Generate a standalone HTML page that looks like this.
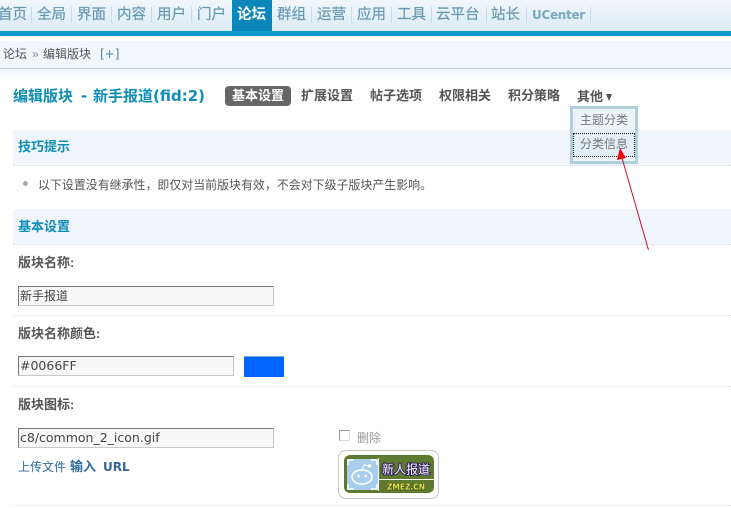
<!DOCTYPE html>
<html><head><meta charset="utf-8">
<style>
html,body{margin:0;padding:0;background:#fff;width:731px;height:508px;overflow:hidden}
body{position:relative;font-family:"Liberation Sans","Noto Sans CJK SC",sans-serif;font-size:12px;color:#555}
.a{position:absolute;white-space:nowrap;line-height:16px}
.nav{font-size:14.5px;color:#6898b0;line-height:20px;top:5px;-webkit-text-stroke:.2px #6898b0}
.d{position:absolute;top:7px;width:1px;height:16px;background:#c6dbe6}
.tab{font-size:13px;font-weight:bold;color:#555;top:88px}
.sec{position:absolute;left:13px;width:718px;height:36px;background:#f0f6fc;border-bottom:1px dotted #d4e0e8;box-sizing:border-box}
.st{font-size:13px;font-weight:bold;color:#0e8eb5}
.lb{font-size:13px;font-weight:bold;color:#555}
.dot{position:absolute;left:13px;width:718px;border-top:1px dotted #dde4e8;height:0}
.in{position:absolute;box-sizing:border-box;height:20px;background:#f8f8f8;border:1px solid #c8c8c8;border-top-color:#777;border-left-color:#777;font-family:"DejaVu Sans","Noto Sans CJK SC",sans-serif;font-size:12.5px;line-height:18px;padding-left:1px;color:#444;white-space:nowrap}
.h{font-family:'DejaVu Sans','Noto Sans CJK SC',sans-serif;font-size:15px;font-weight:bold;color:#0e8eb5;line-height:18px;top:87px}
</style></head><body>
<div style="position:absolute;left:0;top:0;width:731px;height:31px;background:linear-gradient(#f0f7fc,#dcebf6)"></div>
<div style="position:absolute;left:0;top:31px;width:731px;height:5px;background:#0b9ac9"></div>
<div style="position:absolute;left:232px;top:0;width:40px;height:31px;background:#0b86bb"></div>
<div class="a nav" style="left:-2px">首页</div><div class="d" style="left:31px"></div>
<div class="a nav" style="left:37px">全局</div><div class="d" style="left:71px"></div>
<div class="a nav" style="left:77px">界面</div><div class="d" style="left:111px"></div>
<div class="a nav" style="left:117px">内容</div><div class="d" style="left:151px"></div>
<div class="a nav" style="left:157px">用户</div><div class="d" style="left:191px"></div>
<div class="a nav" style="left:197px">门户</div>
<div class="a nav" style="left:237px;color:#fff;font-weight:bold;-webkit-text-stroke:0">论坛</div>
<div class="a nav" style="left:277px">群组</div><div class="d" style="left:311px"></div>
<div class="a nav" style="left:317px">运营</div><div class="d" style="left:351px"></div>
<div class="a nav" style="left:357px">应用</div><div class="d" style="left:391px"></div>
<div class="a nav" style="left:397px">工具</div><div class="d" style="left:431px"></div>
<div class="a nav" style="left:436px">云平台</div><div class="d" style="left:486px"></div>
<div class="a nav" style="left:491px">站长</div><div class="d" style="left:526px"></div>
<div class="a nav" style="left:532px;font-family:'DejaVu Sans',sans-serif;font-size:12px;font-weight:bold;color:#7aa8bd;-webkit-text-stroke:0;letter-spacing:-.3px">UCenter</div><div class="d" style="left:590px"></div>

<div style="position:absolute;left:0;top:41px;width:731px;height:27px;background:#f1f8fd;border-bottom:1px solid #bfd0d6"></div>
<div style="position:absolute;left:0;top:69px;width:731px;height:11px;background:linear-gradient(#eef5fa,#fff)"></div>
<div class="a" style="left:3px;top:46px">论坛</div>
<div class="a" style="left:32px;top:46px;color:#888">»</div>
<div class="a" style="left:43px;top:46px">编辑版块</div>
<div class="a" style="left:100px;top:46px;color:#4f7fa5;font-family:'DejaVu Sans',sans-serif">[+]</div>

<div class="a h" style="left:13px">编辑版块</div>
<div class="a h" style="left:81px">-</div>
<div class="a h" style="left:93px">新手报道(fid:2)</div>
<div style="position:absolute;left:225px;top:86px;width:66px;height:20px;background:#666;border-radius:4px"></div>
<div class="a tab" style="left:232px;color:#fff">基本设置</div>
<div class="a tab" style="left:301px">扩展设置</div>
<div class="a tab" style="left:370px">帖子选项</div>
<div class="a tab" style="left:439px">权限相关</div>
<div class="a tab" style="left:508px">积分策略</div>
<div class="a tab" style="left:577px;top:89px">其他</div>
<div style="position:absolute;left:606px;top:94px;width:0;height:0;border-left:3.5px solid transparent;border-right:3.5px solid transparent;border-top:7px solid #555"></div>

<div class="sec" style="top:130px"></div>
<div class="a st" style="left:18px;top:139px;margin-top:0">技巧提示</div>
<div style="position:absolute;left:23px;top:181px;width:5px;height:5px;border-radius:50%;background:#aaa"></div>
<div class="a" style="left:38px;top:177px;font-size:11.9px;color:#555;letter-spacing:.05px">以下设置没有继承性，即仅对当前版块有效，不会对下级子版块产生影响。</div>

<div class="sec" style="top:209px"></div>
<div class="a st" style="left:18px;top:219px">基本设置</div>

<div class="a lb" style="left:18px;top:255px">版块名称:</div>
<div class="in" style="left:18px;top:286px;width:256px;font-size:12px">新手报道</div>
<div class="dot" style="top:315px"></div>

<div class="a lb" style="left:18px;top:326px">版块名称颜色:</div>
<div class="in" style="left:18px;top:356px;width:216px">#0066FF</div>
<div style="position:absolute;left:244px;top:356px;width:40px;height:21px;background:#0066ff;border:0;box-shadow:inset 0 1px 0 #7aa8d8"></div>
<div class="dot" style="top:386px"></div>

<div class="a lb" style="left:18px;top:397px">版块图标:</div>
<div class="in" style="left:18px;top:428px;width:256px">c8/common_2_icon.gif</div>
<div class="a" style="left:18px;top:459px;color:#2b6a9b">上传文件</div>
<div class="a" style="left:70px;top:459px;color:#2b6a9b;font-size:13px;font-weight:bold">输入</div>
<div class="a" style="left:103px;top:459px;color:#336699;font-family:'DejaVu Sans',sans-serif;font-size:12px;font-weight:bold">URL</div>

<div style="position:absolute;left:339px;top:430px;width:11px;height:11px;box-sizing:border-box;border:1px solid #999;border-right-color:#ddd;border-bottom-color:#ddd;background:#fff"></div>
<div class="a" style="left:357px;top:430px;color:#999">删除</div>

<svg style="position:absolute;left:338px;top:450px" width="101" height="49" viewBox="0 0 101 49">
<rect x="0.5" y="0.5" width="100" height="48" rx="7" fill="#fff" stroke="#c4c4c4"/>
<rect x="6" y="5" width="90" height="38" rx="6" fill="#5d7a2e"/>
<rect x="9" y="9" width="31" height="31" fill="#a9cdec"/>
<path d="M10 15V10H16M33 10H39V15M39 34V39H33M16 39H10V34" fill="none" stroke="#fff" stroke-width="1.5"/>
<path d="M40.5 8V41" stroke="#fff" fill="none"/>
<ellipse cx="24" cy="27" rx="10" ry="7" fill="#a9cdec" stroke="#fff" stroke-width="1.5"/>
<circle cx="20.5" cy="26" r="1.4" fill="#fff"/><circle cx="27.5" cy="26" r="1.4" fill="#fff"/>
<path d="M24 20L26 15L31 16" fill="none" stroke="#fff"/><circle cx="31.5" cy="16" r="1.8" fill="#fff"/>
<rect x="41" y="29" width="55" height="1" fill="#fff"/>
<text x="68" y="23.5" text-anchor="middle" font-family="'Noto Sans CJK SC',sans-serif" font-size="12" fill="#fff" stroke="#33215f" stroke-width="2" paint-order="stroke">新人报道</text>
<text x="68" y="39.5" text-anchor="middle" font-family="'DejaVu Sans',sans-serif" font-size="7.5" font-weight="bold" fill="#e6e04a" stroke="#2d3d10" stroke-width=".8" paint-order="stroke">ZMEZ.CN</text>
</svg>
<div class="dot" style="top:505px"></div>

<div style="position:absolute;left:570px;top:106px;width:68px;height:58px;box-sizing:border-box;border:3px solid #b0cfdc;background:#ecf5fa"></div>
<div class="a" style="left:580px;top:112px;color:#777">主题分类</div>
<div style="position:absolute;left:573px;top:133px;width:62px;height:24px;box-sizing:border-box;border:1px dotted #222;background:#e2eff8"></div>
<div class="a" style="left:580px;top:136px;color:#777">分类信息</div>

<svg style="position:absolute;left:610px;top:145px" width="50" height="110" viewBox="0 0 50 110">
<path d="M38.5 105L12 13" stroke="#c8102e" stroke-width="1" fill="none"/>
<path d="M10 3L7 15L16 13Z" fill="#f00000"/>
</svg>
</body></html>
